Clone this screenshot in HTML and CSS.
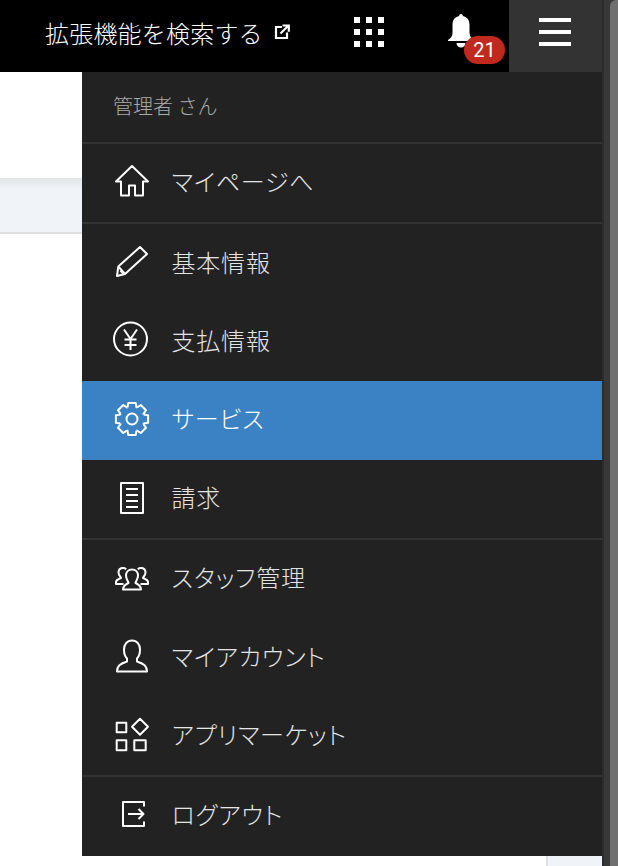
FILE: index.html
```html
<!DOCTYPE html>
<html lang="ja">
<head>
<meta charset="utf-8">
<title>メニュー</title>
<link rel="stylesheet" href="styles.css">
</head>
<body>
<div class="viewport">
  <div class="main">
    <header class="topbar">
      <a class="ext-link"><span>拡張機能を検索する</span>
        <svg class="ext-icon" width="16" height="16" viewBox="0 0 16 16" fill="none" stroke="#fff" stroke-width="2.200"><path d="M8 3H2v11h11V8.500"/><path d="M6.500 9.500 14 2M8.500 1.500h6.300v6.300" /></svg>
      </a>
      <button class="icon-btn apps">
        <svg width="30" height="30" viewBox="0 0 30 30" fill="#fff"><rect width="6" height="6"/><rect x="12" width="6" height="6"/><rect x="24" width="6" height="6"/><rect y="12" width="6" height="6"/><rect x="12" y="12" width="6" height="6"/><rect x="24" y="12" width="6" height="6"/><rect y="24" width="6" height="6"/><rect x="12" y="24" width="6" height="6"/><rect x="24" y="24" width="6" height="6"/></svg>
      </button>
      <div class="bell">
        <svg width="28" height="34" viewBox="0 0 28 34" fill="#fff"><path d="M14 0c1.200 0 1.800.8 1.800 2 4.500 1 6.700 4.300 6.700 9v8c0 3 1.500 5 4.500 7v1H1v-1c3-2 4.500-4 4.500-7v-8c0-4.700 2.200-8 6.700-9 0-1.200.6-2 1.800-2z"/><path d="M9.500 29h9c0 2.800-2 4.500-4.500 4.500s-4.500-1.700-4.500-4.500z"/></svg>
        <span class="badge">21</span>
      </div>
      <button class="icon-btn burger"><i></i><i></i><i></i></button>
    </header>
    <div class="canvas">
      <div class="page-body"><div class="page-band"></div></div>
      <div class="page-side"></div>
      <nav class="menu">
        <div class="menu-head">管理者 さん</div>
        <ul class="group">
          <li class="item"><svg class="ico" viewBox="0 0 36 36"><path d="M19 3 3 18.500h5V32.500h8V22.500h6V32.500h8V18.500h5z"/></svg>マイページへ</li>
        </ul>
        <ul class="group">
          <li class="item"><svg class="ico" viewBox="0 0 36 36"><path d="M4 32l1.300-9.500L27 3l7 7-22 20zM5.300 22.500 12 30M7.500 26.500l2.500 2.800"/></svg>基本情報</li>
          <li class="item"><svg class="ico" viewBox="0 0 36 36"><circle cx="17.500" cy="17" r="16.500"/><path d="M11 7.500l6.500 9.500L24 7.500M17.500 17V28M11.500 17.500H23.500M11.500 23H23.500"/></svg>支払情報</li>
          <li class="item active"><svg class="ico" viewBox="0 0 36 36"><g transform="translate(19 19)"><path d="M-4.500-11.700-3.700-16.100H3.700L4.500-11.700 5.100-11.400"/><path transform="rotate(45)" d="M-4.500-11.700-3.700-16.100H3.700L4.500-11.700 5.100-11.400"/><path transform="rotate(90)" d="M-4.500-11.700-3.700-16.100H3.700L4.500-11.700 5.100-11.400"/><path transform="rotate(135)" d="M-4.500-11.700-3.700-16.100H3.700L4.500-11.700 5.100-11.400"/><path transform="rotate(180)" d="M-4.500-11.700-3.700-16.100H3.700L4.500-11.700 5.100-11.400"/><path transform="rotate(225)" d="M-4.500-11.700-3.700-16.100H3.700L4.500-11.700 5.100-11.400"/><path transform="rotate(270)" d="M-4.500-11.700-3.700-16.100H3.700L4.500-11.700 5.100-11.400"/><path transform="rotate(315)" d="M-4.500-11.700-3.700-16.100H3.700L4.500-11.700 5.100-11.400"/><circle r="5.500"/></g></svg>サービス</li>
          <li class="item"><svg class="ico" viewBox="0 0 36 36"><path d="M8 4H30V34H8zM13 10H25M13 16H25M13 22H25M13 28H25"/></svg>請求</li>
        </ul>
        <ul class="group">
          <li class="item"><svg class="ico" viewBox="0 0 36 36"><path d="M10 30.500c0-3.500 2-5 5.500-6.500 0-1.500-2.500-3.500-2.500-7.500 0-3.500 2.500-6 6-6s6 2.500 6 6c0 4-2.500 6-2.500 7.500 3.500 1.500 5.500 3 5.500 6.500z"/><path d="M10.500 25H3v-2c0-2 2.500-3 5-4 0-1-2.500-2.500-2.500-5.500 0-3 2-4.500 4.500-4.500 1.200 0 2.300.4 3.200 1.200M27.500 25H35v-2c0-2-2.500-3-5-4 0-1 2.500-2.500 2.500-5.500 0-3-2-4.500-4.500-4.500-1.200 0-2.300.4-3.200 1.200"/></svg>スタッフ管理</li>
          <li class="item"><svg class="ico" viewBox="0 0 36 36"><path d="M4 33.500c0-6 4-8 10-10v-3c-2-2-3-5-3-9 0-5 3-9 8-9s8 4 8 9c0 4-1 7-3 9v3c6 2 10 4 10 10z"/></svg>マイアカウント</li>
          <li class="item"><svg class="ico" viewBox="0 0 36 36"><path d="M3.700 6.700h9.600v9.600H3.700zM3.700 24.300h9.600v10H3.700zM21.300 24.300h11.400v10H21.300zM27 2.700l8 8-8 8-8-8z"/></svg>アプリマーケット</li>
        </ul>
        <ul class="group">
          <li class="item"><svg class="ico" viewBox="0 0 36 36"><path d="M31 10.500V6H10v24H31V25.500M15 18H30.500M25.500 13l5 5-5 5"/></svg>ログアウト</li>
        </ul>
      </nav>
    </div>
  </div>
  <aside class="scrollbar"><div class="thumb"></div></aside>
</div>
</body>
</html>
```
FILE: styles.css
```css
* { box-sizing: border-box; }
html, body { margin: 0; padding: 0; height: 100%; overflow: hidden; }
body { background: #fff; font-family: "Noto Sans CJK JP", "Noto Sans", sans-serif; font-weight: 300; color: #fff; }
button { border: 0; background: none; padding: 0; }
ul { list-style: none; margin: 0; padding: 0; }
.viewport { display: flex; width: 618px; height: 866px; }
.main { width: 602px; display: flex; flex-direction: column; }
.topbar { height: 72px; background: #000; display: flex; align-items: flex-start; padding-left: 45px; }
.ext-link { display: flex; align-items: flex-start; flex: none; width: 309px; font-size: 24px; line-height: 34px; letter-spacing: 0.2px; padding-top: 16px; }
.ext-link span { margin-right: 11px; }
.ext-icon { margin-top: 8px; flex: none; }
.icon-btn { display: flex; flex: none; }
.apps { margin-top: 17px; }
.bell { position: relative; flex: none; margin: 14px 0 0 63px; display: flex; width: 28px; height: 34px; }
.badge { position: absolute; left: 17px; top: 22px; width: 41px; height: 28px; border-radius: 14px; background: #c0291d; font: 400 20px/28px Roboto, sans-serif; text-align: center; }
.burger { width: 93px; height: 72px; margin-left: auto; background: #333; flex-direction: column; align-items: center; justify-content: flex-start; gap: 8px; padding: 18px 2px 0 0; }
.burger i { display: block; flex: none; width: 32px; height: 4px; background: #fff; }
.canvas { position: relative; flex: 1; display: flex; }
.page-body { flex: 1; }
.page-band { margin-top: 106px; height: 56px; background: linear-gradient(#e2e5e8, #f0f4f8 12px); border-bottom: 2px solid #e0e0e0; }
.page-side { width: 56px; background: #f0f4f8; border-left: 2px solid #e0e0e0; }
.menu { position: absolute; left: 82px; top: 0; width: 520px; background: #222; }
.menu-head { height: 70px; padding: 18px 0 0 31px; font-size: 20px; line-height: 32px; color: #aaa; }
.group { border-top: 2px solid #333; }
.item { height: 78.4px; display: flex; align-items: center; padding: 0 0 4px 31px; font-size: 24px; font-feature-settings: "palt"; letter-spacing: 0.8px; line-height: 32px; color: #e4e4e4; gap: 22.5px; }
.active { background: #3b82c4; color: #fff; }
.ico { width: 36px; height: 36px; fill: none; stroke: #fff; stroke-width: 2; stroke-linejoin: round; flex: none; overflow: visible; }
.scrollbar { width: 16px; background: #383838; border-left: 2px solid #2c2c2c; padding-left: 6px; }
.thumb { height: 100%; background: #707070; border-radius: 6px 0 0 0; }
```
